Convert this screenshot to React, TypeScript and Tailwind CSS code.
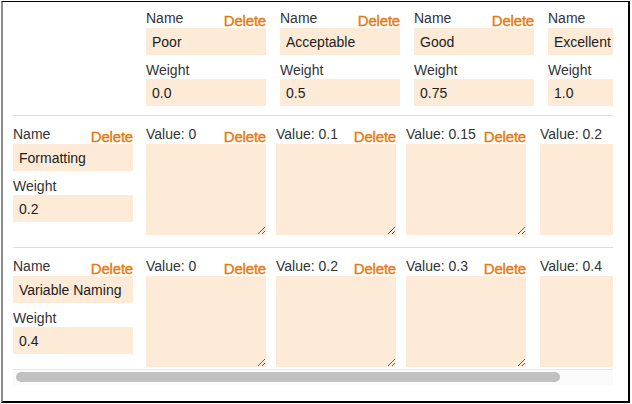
import React from 'react';

type Level = { name: string; weight: string };
type Criterion = { name: string; weight: string; values: string[] };

const LEVELS: Level[] = [
  { name: 'Poor', weight: '0.0' },
  { name: 'Acceptable', weight: '0.5' },
  { name: 'Good', weight: '0.75' },
  { name: 'Excellent', weight: '1.0' },
];

const CRITERIA: Criterion[] = [
  { name: 'Formatting', weight: '0.2', values: ['0', '0.1', '0.15', '0.2'] },
  { name: 'Variable Naming', weight: '0.4', values: ['0', '0.2', '0.3', '0.4'] },
];

// left margin of each column, the picture's gaps are not all the same
const HEAD_GAPS = ['ml-[13px]', 'ml-[14px]', 'ml-[14px]', 'ml-[14px]'];
const CELL_GAPS = ['ml-[13px]', 'ml-[10px]', 'ml-[10px]', 'ml-[14px]'];

function LabelRow({ label }: { label: string }) {
  return (
    <div className="flex h-[18px] items-start justify-between">
      <span className="text-[14px] leading-[17px] text-[#333]">{label}</span>
      <button
        type="button"
        className="mt-[1.5px] text-[15px] leading-[17px] tracking-[-0.2px] text-[#e57a0c] [-webkit-text-stroke:0.35px_#e57a0c]"
      >
        Delete
      </button>
    </div>
  );
}

function Field({ value }: { value: string }) {
  return (
    <input
      type="text"
      defaultValue={value}
      className="block h-[27px] w-[120px] bg-[#fdebd8] px-[6px] text-[14px] text-[#1c1c1c] outline-none"
    />
  );
}

function NameWeight({ name, weight, className }: { name: string; weight: string; className?: string }) {
  return (
    <div className={`w-[120px] shrink-0 ${className ?? ''}`}>
      <LabelRow label="Name" />
      <Field value={name} />
      <div className="mt-[7px] h-[17px] text-[14px] leading-[17px] text-[#333]">Weight</div>
      <Field value={weight} />
    </div>
  );
}

export default function App() {
  return (
    <div className="h-[404px] w-[632px] bg-white pl-px pt-px font-['Liberation_Sans',Arial,sans-serif]">
      <div className="h-[402px] w-[629px] border-b-2 border-l-2 border-r-2 border-t border-b-black border-l-[#8c8c8c] border-r-black border-t-black pl-[10px] pr-[15px]">
        <div className="overflow-hidden">
          <div className="flex border-b border-[#dcdcdc] pb-[9px] pt-[8px]">
            <div className="w-[120px] shrink-0" />
            {LEVELS.map((l, i) => (
              <NameWeight key={l.name} name={l.name} weight={l.weight} className={HEAD_GAPS[i]} />
            ))}
          </div>

          {CRITERIA.map((c, ci) => (
            <div
              key={c.name}
              className={ci === 0 ? 'flex border-b border-[#dcdcdc] pb-[12px] pt-[10px]' : 'flex pb-[2px] pt-[10px]'}
            >
              <NameWeight name={c.name} weight={c.weight} />
              {c.values.map((v, vi) => (
                <div key={vi} className={`w-[120px] shrink-0 ${CELL_GAPS[vi]}`}>
                  <LabelRow label={`Value: ${v}`} />
                  <textarea className="block h-[91px] w-[120px] bg-[#fdebd8] p-[6px] text-[14px] outline-none" />
                </div>
              ))}
            </div>
          ))}

          <div className="h-[16px] border-t border-[#e6e6e6] bg-[#fafafa] px-[3px] pt-[2px]">
            <div className="h-[10px] w-[544px] rounded-full bg-[#c1c1c1]" />
          </div>
        </div>
      </div>
    </div>
  );
}
